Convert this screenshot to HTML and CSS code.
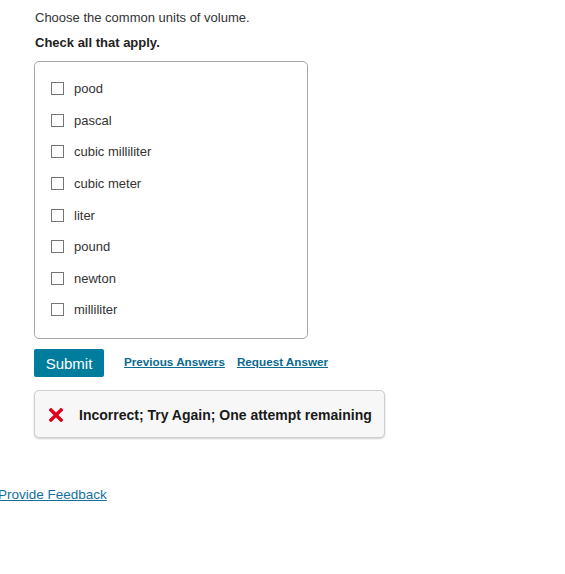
FILE: index.html
```html
<!DOCTYPE html>
<html>
<head>
<meta charset="utf-8">
<link rel="stylesheet" href="styles.css">
</head>
<body>
<div class="page">
  <div class="question">
    <p class="prompt">Choose the common units of volume.</p>
    <p class="instr">Check all that apply.</p>
    <div class="choices">
      <label class="choice"><span class="box"></span><span>pood</span></label>
      <label class="choice"><span class="box"></span><span>pascal</span></label>
      <label class="choice"><span class="box"></span><span>cubic milliliter</span></label>
      <label class="choice"><span class="box"></span><span>cubic meter</span></label>
      <label class="choice"><span class="box"></span><span>liter</span></label>
      <label class="choice"><span class="box"></span><span>pound</span></label>
      <label class="choice"><span class="box"></span><span>newton</span></label>
      <label class="choice"><span class="box"></span><span>milliliter</span></label>
    </div>
    <div class="actions">
      <button class="submit">Submit</button>
      <a class="action-link" href="#">Previous Answers</a>
      <a class="action-link" href="#">Request Answer</a>
    </div>
    <div class="feedback">
      <svg class="xicon" width="14" height="14" viewBox="0 0 14 14"><path d="M2 2 L12 12 M12 2 L2 12" stroke="#e0001b" stroke-width="3.4" stroke-linecap="square"/></svg>
      <span class="fb-text">Incorrect; Try Again; One attempt remaining</span>
    </div>
  </div>
  <a class="provide" href="#">Provide Feedback</a>
</div>
</body>
</html>
```
FILE: styles.css
```css
html, body {
  margin: 0;
  padding: 0;
  background: #fff;
}
body {
  font-family: "Liberation Sans", Arial, sans-serif;
  color: #333;
}
.page {
  padding-top: 9px;
}
.question {
  padding-left: 34px;
}
.prompt {
  margin: 0 0 0 1px;
  font-size: 13px;
  line-height: 18px;
}
.instr {
  margin: 8px 0 0 1px;
  font-size: 13px;
  line-height: 16px;
  font-weight: bold;
  color: #222;
}
.choices {
  margin-top: 10px;
  width: 274px;
  height: 278px;
  border: 1px solid #a8a8a8;
  border-radius: 5px;
  box-sizing: border-box;
  padding-top: 11px;
  display: flex;
  flex-direction: column;
}
.choice {
  display: flex;
  align-items: center;
  height: 31.6px;
  flex: none;
  padding-left: 16px;
  font-size: 13px;
  color: #333;
}
.box {
  width: 11px;
  height: 11px;
  border: 1px solid #767676;
  margin-right: 10px;
  flex: none;
}
.actions {
  display: flex;
  align-items: center;
  margin-top: 10px;
}
.submit {
  width: 70px;
  height: 28px;
  background: #007c9c;
  color: #fff;
  border: none;
  border-radius: 2px;
  font-family: "Liberation Sans", Arial, sans-serif;
  font-size: 15px;
  padding: 0;
  margin-right: 20px;
}
.action-link {
  font-size: 11.7px;
  font-weight: bold;
  color: #0a6a8f;
  text-decoration: underline;
  margin-right: 12px;
  position: relative;
  top: -2px;
}
.feedback {
  margin-top: 13px;
  width: 351px;
  height: 48px;
  box-sizing: border-box;
  background: #f7f7f7;
  border: 1px solid #cfcfcf;
  border-radius: 5px;
  box-shadow: 0 1px 2px rgba(0,0,0,0.2);
  display: flex;
  align-items: center;
  padding-left: 14px;
  padding-top: 2px;
}
.xicon {
  flex: none;
  margin-right: 16px;
}
.fb-text {
  font-size: 14px;
  font-weight: bold;
  color: #1a1a1a;
}
.provide {
  display: inline-block;
  margin-top: 49px;
  margin-left: -2px;
  font-size: 13.5px;
  color: #1570a0;
  text-decoration: underline;
}
```
